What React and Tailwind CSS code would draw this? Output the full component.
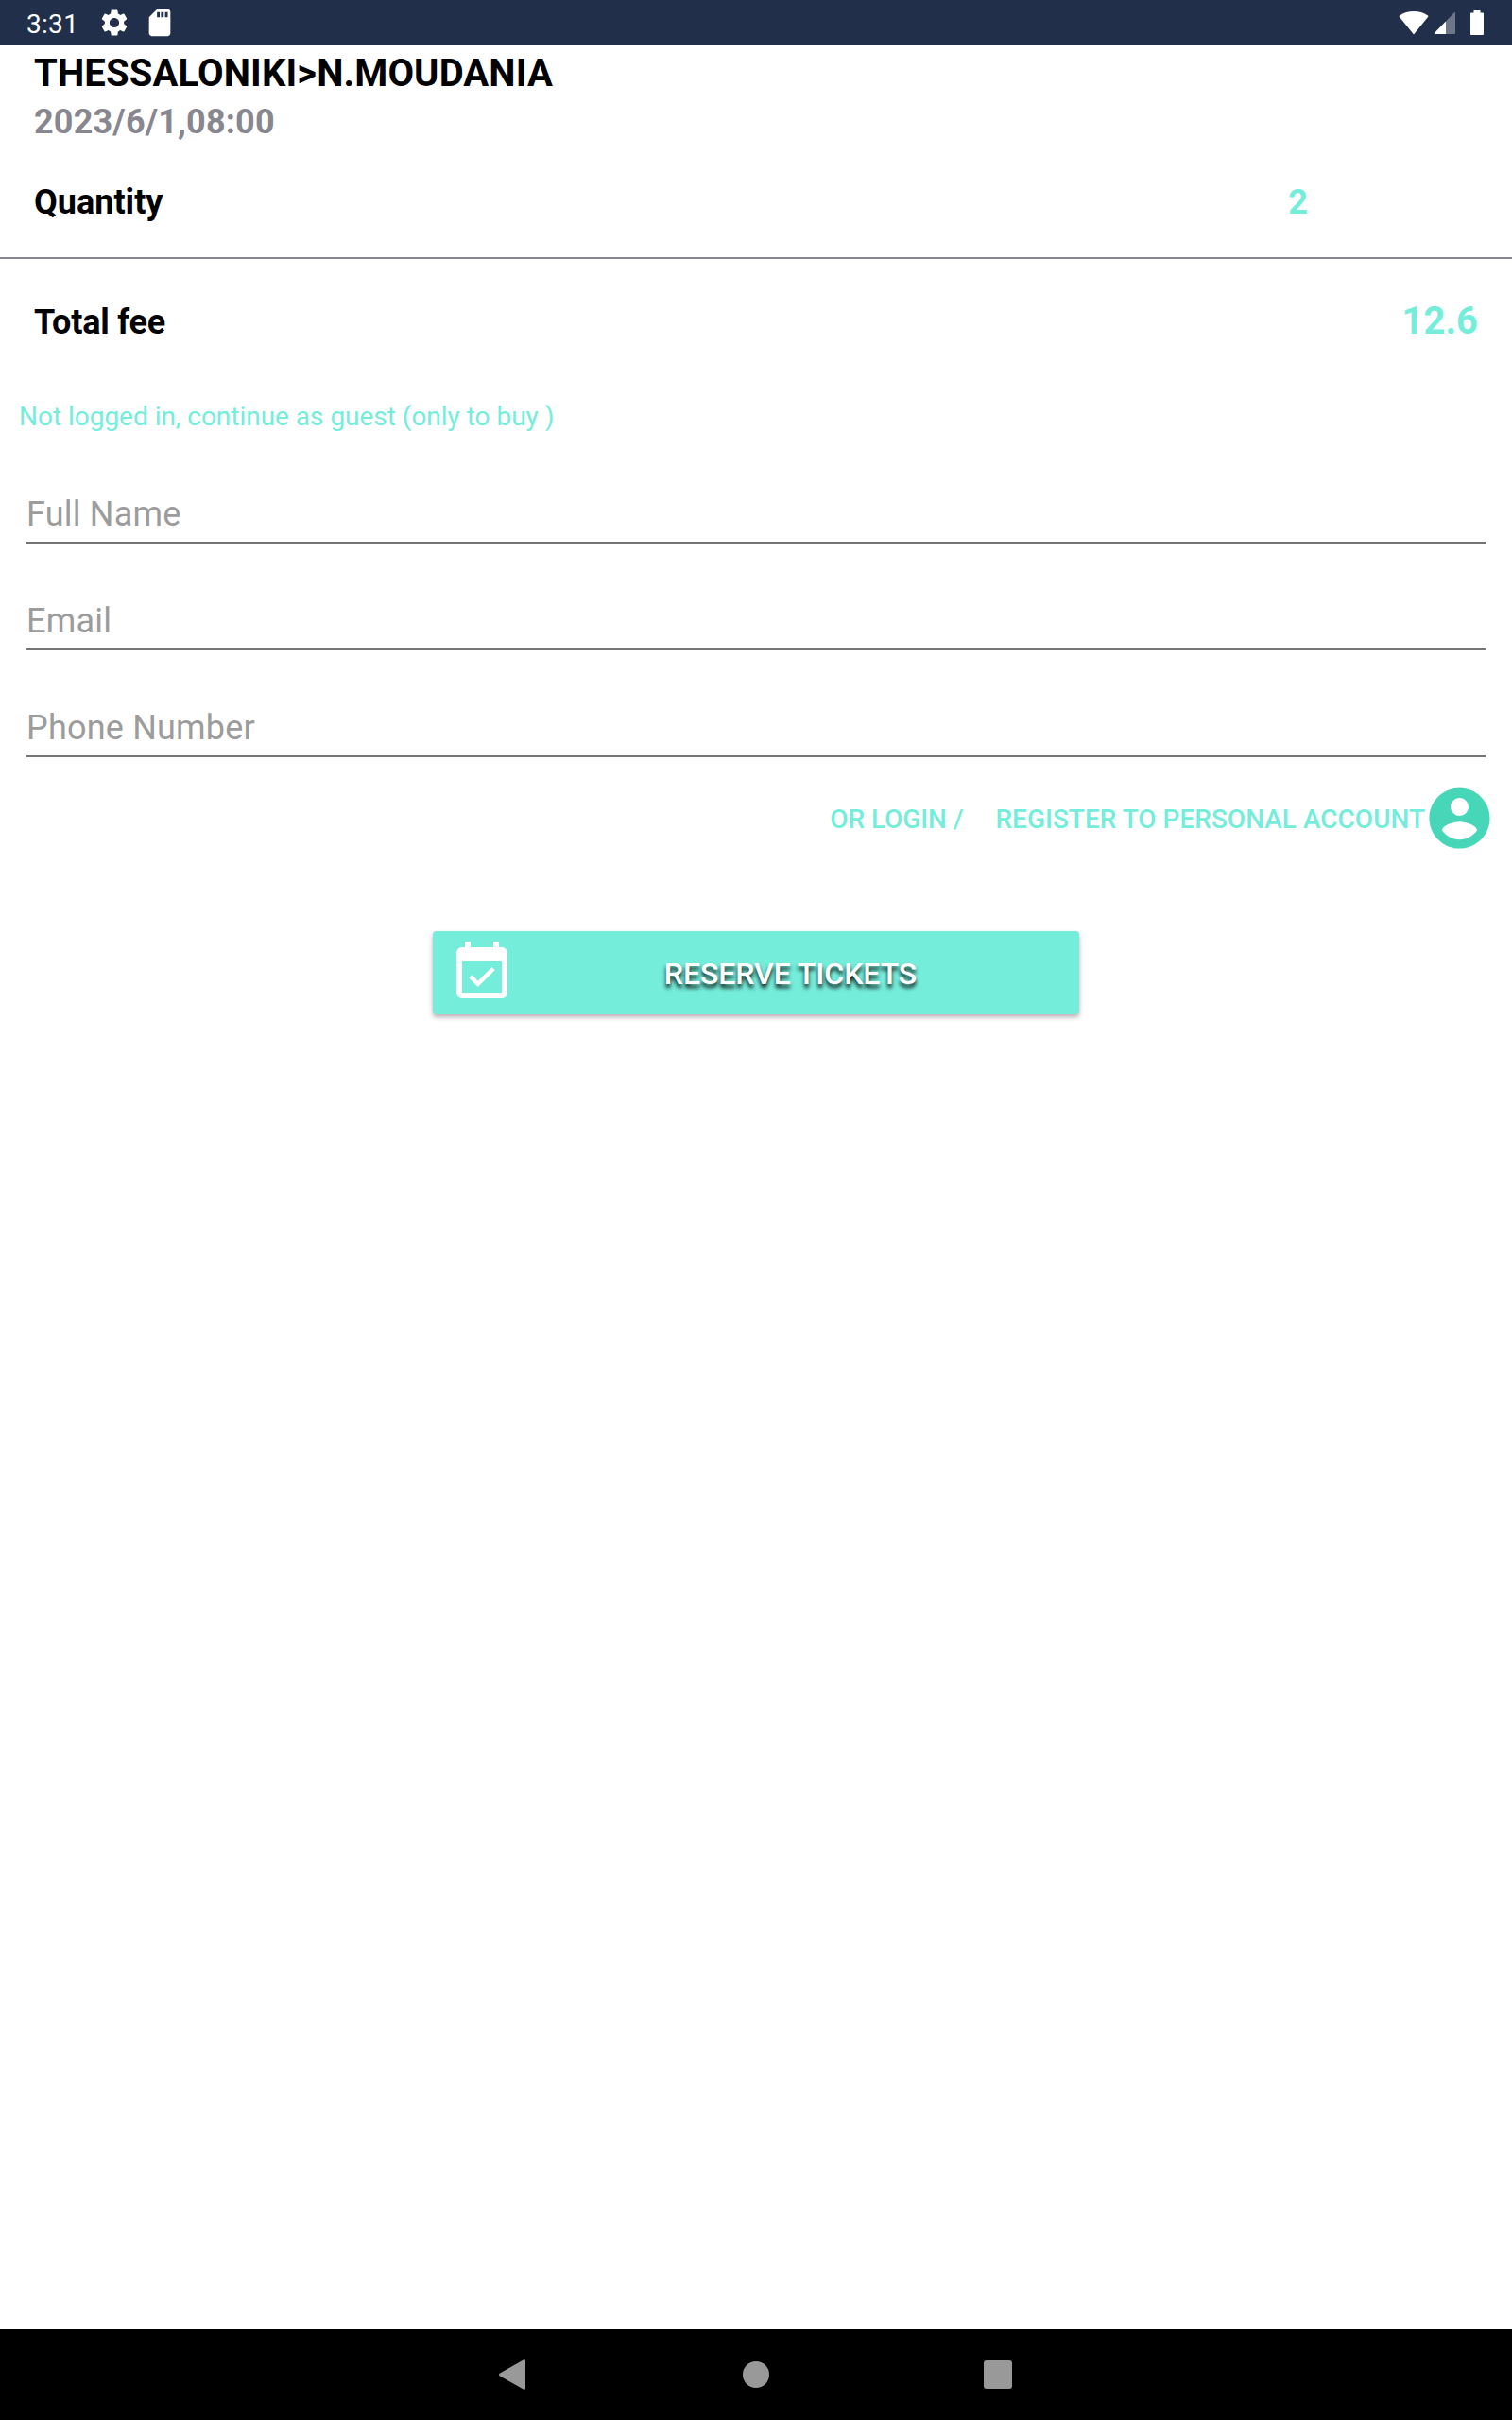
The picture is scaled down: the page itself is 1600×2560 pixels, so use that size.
import React from 'react';
import { MdEventAvailable, MdSdCard, MdSettings } from 'react-icons/md';

const FIELDS = ['Full Name', 'Email', 'Phone Number'];

function StatusBar() {
  return (
    <header className="flex h-12 items-center justify-between bg-[#212f4b] pl-7 pr-[30px] text-white">
      <div className="flex items-center">
        <span className="w-[76px] pt-[3px] text-[28px] leading-8 tracking-[0.3px]">3:31</span>
        <MdSettings className="size-[34px]" />
        <MdSdCard className="ml-3.5 size-[34px]" />
      </div>
      <div className="flex items-center">
        <svg className="h-[26px] w-8" viewBox="0 0 32 26" fill="currentColor">
          <path d="M16 25.5 L0.8 6.8 Q0.3 6 1 5.4 Q7.500 1 16 1 Q24.500 1 31 5.4 Q31.700 6 31.200 6.800 Z" />
        </svg>
        <svg className="ml-[5px] h-[26px] w-6" viewBox="0 0 24 26" fill="currentColor">
          <path d="M13 11.500 V25 H2 Q0 25 1.300 23.400 Z" />
          <path d="M13 11.500 L22 2.300 Q23 1.500 23 3 V24 Q23 25 22 25 H13 Z" opacity="0.35" />
        </svg>
        <svg className="ml-[15px] h-[26px] w-3.5" viewBox="0 0 14 26" fill="currentColor">
          <path d="M3.500 0 H10.500 V2.500 H13 Q14 2.500 14 3.500 V25 Q14 26 13 26 H1 Q0 26 0 25 V3.500 Q0 2.500 1 2.500 H3.500 Z" />
        </svg>
      </div>
    </header>
  );
}

function NavBar() {
  return (
    <nav className="flex h-24 items-center justify-center bg-black text-[#999999]">
      <div className="flex w-64 justify-center">
        <svg className="mr-1 h-8 w-7" viewBox="0 0 28 32" fill="currentColor">
          <path d="M0.600 14.800 L25.800 0.400 Q28 -0.400 28 1.600 V30.400 Q28 32.400 25.800 31.600 L0.600 17.200 Q-0.600 16 0.600 14.800 Z" />
        </svg>
      </div>
      <div className="flex w-64 justify-center">
        <div className="size-7 rounded-full bg-[#999999]" />
      </div>
      <div className="flex w-64 justify-center">
        <div className="size-[30px] rounded-[3px] bg-[#999999]" />
      </div>
    </nav>
  );
}

function AccountIcon({ className }) {
  return (
    <svg className={className} viewBox="0 0 24 24" fill="currentColor">
      <path d="M12 2C6.48 2 2 6.48 2 12s4.480 10 10 10 10-4.480 10-10S17.520 2 12 2zm0 3.300c1.600 0 2.950 1.340 2.950 2.950s-1.350 2.950-2.950 2.950-2.950-1.340-2.950-2.950S10.400 5.300 12 5.300zm0 13.800c-2.400 0-4.500-1.200-5.800-3.100.3-1.700 3.800-2.800 5.800-2.800s5.500 1.100 5.800 2.800c-1.300 1.900-3.400 3.100-5.800 3.100z" />
    </svg>
  );
}

function Field({ label }) {
  return (
    <div className="mb-[66px] border-b-2 border-[#757575] pb-3 text-[36px] leading-[33px] tracking-[0.2px] text-[#9c9c9c]">
      {label}
    </div>
  );
}

export default function App() {
  return (
    <div className="flex h-[2560px] w-[1600px] flex-col bg-white font-['Roboto',sans-serif]">
      <StatusBar />

      <main className="flex-1">
        <section className="h-[226px] border-b-2 border-[#88868f] px-9 pt-1.5 font-bold">
          <h1 className="text-[40px] leading-[48px] tracking-[0.14px]">THESSALONIKI&gt;N.MOUDANIA</h1>
          <p className="mt-1.5 text-[36px] leading-[42px] tracking-[0.18px] text-[#88868f]">2023/6/1,08:00</p>
          <div className="mt-[43px] flex justify-between text-[36px] leading-[42px]">
            <span>Quantity</span>
            <span className="mr-[180px] text-[#75eddb]">2</span>
          </div>
        </section>

        <section className="flex items-baseline justify-between px-9 pt-[42px] font-bold">
          <span className="text-[36px] leading-[42px] tracking-[-0.2px]">Total fee</span>
          <span className="text-[40px] leading-[48px] text-[#75eddb]">12.6</span>
        </section>

        <p className="ml-5 mt-[61px] text-[28px] leading-8 tracking-[-0.02px] text-[#75eddb]">
          Not logged in, continue as guest (only to buy )
        </p>

        <form className="mx-7 mt-[71px]">
          {FIELDS.map((label) => (
            <Field key={label} label={label} />
          ))}
        </form>

        <div className="-mt-[41px] mr-[17px] flex h-[78px] items-center justify-end text-[28px] font-medium leading-8 text-[#75eddb]">
          <span className="pt-1 tracking-[-0.1px]">OR LOGIN /</span>
          <span className="ml-[34px] pt-1">REGISTER TO PERSONAL ACCOUNT</span>
          <AccountIcon className="-ml-[2px] size-[77px] text-[#47d6b8]" />
        </div>

        <button className="mx-auto mt-[81px] flex h-[88px] w-[684px] items-center rounded bg-[#75eddb] px-4 text-white shadow-[0_3px_5px_rgba(60,30,40,0.35)]">
          <MdEventAvailable className="size-[72px]" />
          <span className="flex-1 pl-px pt-0.5 text-center text-[32px] font-medium leading-[38px] tracking-[-0.05px] [text-shadow:0_4px_4px_rgba(0,0,0,0.9)]">
            RESERVE TICKETS
          </span>
        </button>
      </main>

      <NavBar />
    </div>
  );
}
